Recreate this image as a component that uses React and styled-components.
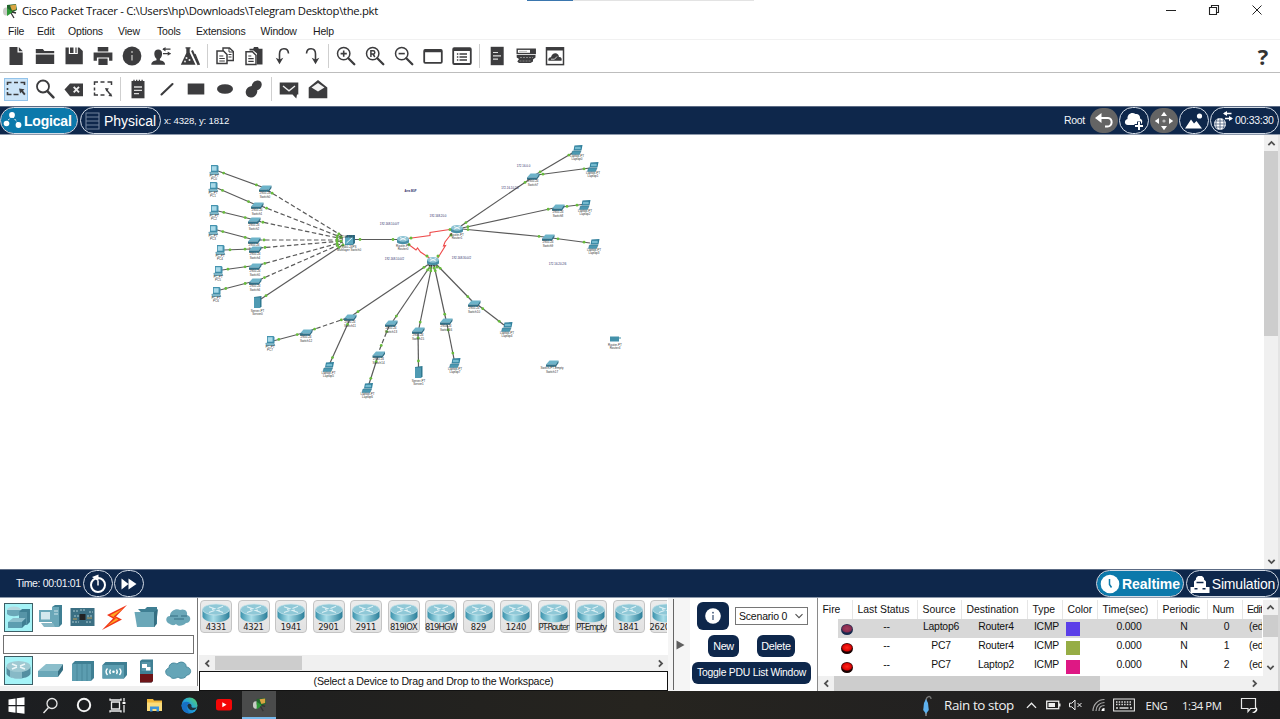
import React from "react";
import styled, { createGlobalStyle, css } from "styled-components";

const GlobalStyle = createGlobalStyle`
  * { box-sizing: border-box; }
  body { margin: 0; background: #fff; overflow: hidden; }
  svg { display: block; flex: none; }
`;

const NAVY = "#0e274b";
const INK = "#3c3c3e";

const Window = styled.div`
  width: 1280px; height: 719px; display: flex; flex-direction: column;
  font-family: "Liberation Sans", Arial, sans-serif; font-size: 10.5px; letter-spacing: -0.1px;
  color: #111; background: #fff; overflow: hidden; white-space: nowrap;
`;
const Row = styled.div`display: flex; align-items: center;`;
const Grow = styled.div`flex: 1; min-width: 0;`;

/* ---------- title, menu, toolbars ---------- */
const TitleBar = styled.header`
  height: 22px; display: flex; align-items: center; padding: 0 0 1px 2px; flex: none; position: relative;
`;
const TitleText = styled.span`
  font: 11.3px "Open Sans", sans-serif; letter-spacing: -0.32px; margin-left: 4px; color: #111;
`;
const ShareBar = styled.div`
  position: absolute; left: 527px; top: 0; width: 227px; height: 1px; background: #e3e3e3;
  border-left: 46px solid #3a76ae;
`;
const WinButtons = styled.div`display: flex; padding-right: 2px; margin-top: -2px;`;
const WinButton = styled.div`width: 43px; height: 20px; display: grid; place-items: center;`;
const MenuBar = styled.nav`
  height: 18px; flex: none; display: flex; align-items: center; padding: 0 0 0 8px; border-bottom: 1px solid #f1f1f1;
`;
const MenuItem = styled.span`width: ${p => p.$w}px; color: #1a1a1a; letter-spacing: -0.18px;`;
const Toolbar = styled.div`
  height: 33px; flex: none; display: flex; align-items: center; padding-left: 1.5px;
  border-bottom: 1px solid ${p => p.$line || "#bdbdbd"};
`;
const Tool = styled.div`width: 29px; height: 24px; display: grid; place-items: center;`;
const ToolFace = styled.div`
  width: 24px; height: 23px; display: grid; place-items: center;
  ${p => p.$on && css`background: #cce4f7; border: 1px solid #92c3ea;`}
`;
const Sep = styled.div`
  width: ${p => p.$w || 6}px; height: 24px; display: flex; justify-content: center;
  &::before { content: ""; width: 1px; background: #cfcfcf; }
`;
const HelpMark = styled.div`
  font: bold 22px/22px "Open Sans", sans-serif; color: #333; width: 34px; text-align: center;
`;

/* ---------- navy bars ---------- */
const NavyBar = styled.div`
  height: ${p => p.$h}px; flex: none; background: ${NAVY}; display: flex; align-items: center; color: #fff;
  border-top: 1px solid #5c6b84; border-bottom: 1px solid #8d99ab;
  padding-left: ${p => p.$pad || 0}px; padding-right: 1px;
`;
const Pill = styled.div`
  height: 27px; width: ${p => p.$w}px; margin-right: ${p => p.$gap ?? 1}px; border-radius: 14px;
  border: 1.5px solid ${p => (p.$flat ? "transparent" : "#d3dbe6")};
  background: ${p => (p.$on ? "#0c79ab" : p.$flat ? "#646464" : "transparent")};
  background-clip: padding-box; padding-left: ${p => p.$pad || 0}px;
  display: flex; align-items: center; justify-content: ${p => (p.$pad ? "flex-start" : "center")};
  gap: ${p => p.$space || 0}px; flex: none;
`;
const PillText = styled.span`
  font-size: 14px; letter-spacing: ${p => p.$ls || 0}px; font-weight: ${p => (p.$bold ? 700 : 400)};
`;
const SmallWhite = styled.span`
  color: #f2f5f9; font-size: ${p => p.$size || 10.5}px; letter-spacing: ${p => p.$ls || -0.2}px;
  width: ${p => (p.$w ? p.$w + "px" : "auto")}; padding-bottom: 1px;
`;

/* ---------- workspace ---------- */
const Workspace = styled.main`flex: 1; min-height: 0; display: flex; border-right: 2px solid #e4e4e4;`;
const VScroll = styled.div`
  width: ${p => p.$w || 14}px; background: #f0f0f0; display: flex; flex-direction: column; align-items: center; flex: none;
`;
const HScroll = styled.div`height: ${p => p.$h}px; background: #f0f0f0; display: flex; align-items: center; flex: none;`;
const Arrow = styled.div`width: 16px; height: ${p => p.$h || 16}px; display: grid; place-items: center; flex: none;`;
const Thumb = styled.div`
  background: #cdcdcd; width: ${p => (p.$w ? p.$w + "px" : "100%")}; height: ${p => (p.$h ? p.$h + "px" : "100%")}; flex: none;
`;

/* ---------- bottom dock ---------- */
const Dock = styled.section`height: 93px; flex: none; display: flex; background: #f0f0f0;`;
const Palette = styled.div`
  width: 198px; background: #fff; border-right: 1px solid #777; height: 88px; padding: 4px 3px 0 3px; display: flex; flex-direction: column;
`;
const PaletteRow = styled.div`display: flex; height: 30px; align-items: center;`;
const PaletteCell = styled.div`width: 32px; height: 29px; display: flex; justify-content: center; align-items: center;`;
const PaletteFace = styled.div`
  width: 29px; height: 29px; display: grid; place-items: center;
  ${p => p.$on && css`background: #a5f3f7; border: 1px solid #3d5f66;`}
`;
const SearchBox = styled.div`height: 19px; border: 1px solid #707070; background: #fff; margin: 3px 0 1px; width: 191px;`;
const DevicePanel = styled.div`width: 470px; display: flex; flex-direction: column; background: #fff; border-left: 1px solid #fff;`;
const DeviceRow = styled.div`height: 57px; display: flex; gap: 5.5px; padding: 2px 0 0 1px; overflow: hidden; margin-right: 1px;`;
const DeviceTile = styled.div`
  width: 32px; height: 32.5px; border: 1px solid #c4c4c4; border-radius: 4px; background: linear-gradient(#ececec, #e2e2e2);
  flex: none; display: flex; flex-direction: column; align-items: center; padding-top: 2px;
`;
const DeviceName = styled.span`
  font: 8.4px/9px "DejaVu Sans", sans-serif; letter-spacing: ${p => p.$ls || -0.2}px; color: #1c1c1c;
`;
const HintBox = styled.div`
  height: 20px; border: 1px solid #111; background: #fff; display: flex; align-items: center; justify-content: center;
  font-size: 10.6px; letter-spacing: -0.2px;
`;
const Splitter = styled.div`
  width: 22px; padding-left: 5px; display: flex; align-items: center; background: #f5f5f5;
  &::before { content: ""; width: 1px; height: 91px; background: #666; margin-right: 2px; }
`;
const PduPanel = styled.div`
  width: 128px; background: #fff; border-right: 1px solid #8a8a8a; padding: 4px 2px 0; display: flex; flex-direction: column; gap: 4.5px;
`;
const ScenarioRow = styled(Row)`gap: 6px; padding-left: 5px;`;
const ActionRow = styled(Row)`justify-content: space-between; padding: 0 20px 0 16px;`;
const NavyButton = styled.button`
  border: 0; padding: 0; border-radius: 6px; background: ${NAVY}; color: #fff; height: ${p => p.$h}px; width: ${p => p.$w}px;
  font: ${p => p.$size || 10.8}px "Liberation Sans", sans-serif; letter-spacing: ${p => p.$ls || -0.3}px;
  display: grid; place-items: center; flex: none;
`;
const SelectBox = styled.div`
  width: 73px; height: 18px; border: 1px solid #767676; display: flex; align-items: center; justify-content: space-between;
  padding: 0 3px; font-size: 10.5px; letter-spacing: -0.2px;
`;
const Table = styled.div`flex: 1; min-width: 0; display: flex; flex-direction: column; background: #fff; border-right: 2px solid #d5d5d5;`;
const TableTop = styled.div`height: 78px; display: flex; padding-top: 2px;`;
const Grid = styled.div`
  flex: 1; min-width: 0; display: grid; grid-template-columns: 35px 65px 44px 66px 35px 35px 60px 50px 35px 19px;
  grid-template-rows: 19px 19px 19px 19px; overflow: hidden;
`;
const Head = styled.div`
  border-right: 1px solid #e6e6e6; padding-left: 4.5px; line-height: 20px; overflow: hidden; font-size: 10.4px;
  letter-spacing: ${p => p.$ls ?? 0}px;
`;
const LastHead = styled(Head)`border-right: 0; padding-left: 4px;`;
const Cell = styled.div`
  font-size: 10.4px; letter-spacing: -0.2px; line-height: 16px; overflow: hidden; padding-left: 2px;
  display: flex; justify-content: ${p => (p.$left ? "flex-start" : "center")};
  background: ${p => (p.$sel ? "#d8d8d8" : "#fff")}; margin-left: ${p => p.$indent || 0}px;
`;
const EditCell = styled(Cell)`padding-left: 6px;`;
const Swatch = styled.div`width: 14px; height: 14px; margin: 3px 0 0 1px; background: ${p => p.$c};`;
const FireDot = styled.div`
  width: 14px; height: 11px; border-radius: 50%; margin: 4.5px 0 0 1px;
  background: ${p => (p.$sel
    ? "radial-gradient(ellipse 6px 4.5px at 50% 42%, #a33a5a 0, #8a2c50 70%, #14284c 100%)"
    : "radial-gradient(ellipse 6px 4.5px at 50% 42%, #ff2a1c 0, #e00505 70%, #180202 100%)")};
`;

/* ---------- taskbar ---------- */
const Taskbar = styled.footer`
  height: 28px; flex: none; display: flex; align-items: center;
  background: linear-gradient(90deg, #1c1e21 0, #20201f 25%, #26241f 50%, #222121 75%, #1c1c1d 100%);
  color: #f0f0f0; font: 11.3px "Open Sans", sans-serif; letter-spacing: -0.4px;
`;
const Task = styled.div`
  width: ${p => p.$w || 35}px; height: 28px; display: grid; place-items: center; flex: none;
  ${p => p.$active && css`background: #4a4b4b; border-bottom: 2px solid #76b9ed;`}
`;
const TrayText = styled.span`
  font-size: ${p => p.$size || 11.3}px; letter-spacing: ${p => p.$ls || -0.4}px; width: ${p => p.$w}px; flex: none;
`;

const Svg = ({ w = 20, h = w, vb, children, ...p }) => (
  <svg width={w} height={h} viewBox={vb || `0 0 ${w} ${h}`} fill="none" {...p}>{children}</svg>
);
const st = { stroke: INK, strokeWidth: 1.8, strokeLinecap: "round", strokeLinejoin: "round" };

const I = {
  doc: <Svg><path d="M3.5 1h8v5.5h5.2V19H3.5z M12.8 1l4 4.3h-4z" fill={INK} /></Svg>,
  folder: <Svg><path d="M.8 3h7l1.6 2h9.8v2.2H.8z M.8 8.5h18.4V18H.8z" fill={INK} /></Svg>,
  save: <Svg><path d="M1.5 1.5h3.3V8h9V1.5h1.4l3.6 3.6v13.2H1.5z M6 1.5h3.5V7H6z M11.4 1.5h1.2V7h-1.2z" fill={INK} /></Svg>,
  print: <Svg><path d="M4.7 1h10.6v4.4H4.7z M.6 6.4h18.8v8.3h-3.3v-3.3H3.9v3.3H.6z M5.4 12.6h9.2V19H5.4z" fill={INK} /></Svg>,
  info: <Svg><circle cx="10" cy="10" r="9.4" fill={INK} /><path d="M10 9v5.5" stroke="#aaa" strokeWidth="1.6" /><circle cx="10" cy="6" r="1" fill="#aaa" /></Svg>,
  user: <Svg><path d="M.3 18.8c0-3.2 2.7-4 5.2-4.6v-1.4c-1.500-1.300-2.200-3.200-2.200-5C3.300 5 5 3.600 7.200 3.600s3.900 1.400 3.900 4.200c0 1.800-.7 3.700-2.200 5v1.400c2.500.6 5.200 1.400 5.200 4.600z" fill={INK} /><path d="M12 3.200h7.500M19.500 7.600H12" stroke={INK} strokeWidth="1.3" /><path d="M14.500 1v4.400L11.300 3.200zM16.700 5.400v4.400l3.200-2.200z" fill={INK} /></Svg>,
  lab: <Svg><path d="M5.500 1.200h5v1.300h-.8v4L15.500 18.800H.8L6.300 7V2.500h-.8z" fill={INK} /><path d="M12 4.500l6.500 14.300" stroke={INK} strokeWidth="2" /><path d="M15 8l4.500 10.800" stroke={INK} strokeWidth="1.2" /><circle cx="6.500" cy="12" r="1" fill="#eee" /><circle cx="9.500" cy="14" r="1" fill="#eee" /><circle cx="5" cy="15.500" r=".9" fill="#eee" /></Svg>,
  copy: <Svg><path d="M8 2h6.500L18.300 5.500v9H8z" fill="#fff" stroke={INK} strokeWidth="1.4" /><path d="M14 2v4h4" stroke={INK} /><path d="M2 5h6.500l3.500 3.500V17.500H2z" fill="#fff" stroke={INK} strokeWidth="1.5" /><path d="M4.300 10h4M4.300 12.500h5.500M4.300 15h5.500M13.500 8.500h3M13.500 11h3" stroke={INK} strokeWidth="1.2" /></Svg>,
  paste: <Svg><path d="M5.500 2.800h3.700L10 1h4l.8 1.800h3.700V18.500H13V7.500L9.500 4.500h-4z" fill={INK} /><path d="M2 5.800h6.500L12 9.300v9.200H2z" stroke={INK} strokeWidth="1.5" fill="#fff" /><path d="M4.300 10h3M4.300 12.700h5.400M4.300 15.400h5.400" stroke={INK} strokeWidth="1.2" /></Svg>,
  undo: <Svg><path d="M15.500 7.500C15 1 6.500 1.200 6.500 8v6" stroke={INK} strokeWidth="1.6" /><path d="M2.700 11.800L6.500 18.300l3.800-6.500-3.800 1.600z" fill={INK} /></Svg>,
  redo: <Svg><path d="M4.500 7.500C5 1 13.500 1.200 13.500 8v6" stroke={INK} strokeWidth="1.6" /><path d="M9.700 11.800l3.800 6.500 3.800-6.500-3.800 1.600z" fill={INK} /></Svg>,
  win: <Svg><rect x="1.200" y="4" width="17.600" height="12.800" rx="1" stroke={INK} strokeWidth="1.8" /><path d="M1.500 5h17" stroke={INK} strokeWidth="2.5" /></Svg>,
  list: <Svg><rect x="1.200" y="2.200" width="17.600" height="15.800" rx="1" stroke={INK} strokeWidth="1.8" /><path d="M1.500 3.500h17" stroke={INK} strokeWidth="3" /><path d="M7.500 8h7.500M7.500 11h7.500M7.500 14h7.500M4.900 8h1.400M4.900 11h1.400M4.900 14h1.400" stroke={INK} strokeWidth="1.3" /></Svg>,
  note: <Svg><path d="M3.700 .8h13v18.400h-13z" fill={INK} /><path d="M6 6.500h5M6 9.800h8M6 13.200h5" stroke="#ddd" strokeWidth="1.2" /></Svg>,
  stack: <Svg><rect x="1.200" y="3.200" width="18" height="4.300" stroke={INK} strokeWidth="1.4" /><path d="M14 3h5.500v5H14zM.7 9h18.800v2.500L17 13.500v2L14.500 17H3l-1.700-1.500L3 13l-2.300-1.500z" fill={INK} /><path d="M3 5.400h8" stroke="#aaa" strokeWidth=".8" /><path d="M4 11.500h13M3.500 15h11" stroke="#999" strokeWidth=".8" strokeDasharray="2 1" /></Svg>,
  cloudwin: <Svg><rect x="1.500" y="1.800" width="17" height="16.800" stroke={INK} strokeWidth="1.5" /><path d="M1.500 3h17" stroke={INK} strokeWidth="3" /><path d="M3.500 14.800c-.8-2.200.8-3.800 2.500-3.600C6.800 8.200 9.500 6.500 12 7.800c1.800.9 2 2.500 1.800 3.300 2.500-.3 3.500 1.700 2.700 3.700z" fill={INK} /><path d="M6 13.200h3.500l2.500-2.700" stroke="#ddd" strokeWidth=".9" /></Svg>,
  select: <Svg><path d="M1.500 6V3.500h4M8 3.500h4M14.500 3.500h4V6M1.500 9v2M1.500 13v2.500h4M7.500 15.500h5" stroke={INK} strokeWidth="1.6" /><path d="M13 9.500l5.500.8-1.500 1.500 2.600 3.200-1.500 1.300-2.700-3.300-1.300 1.500z" fill={INK} /></Svg>,
  glass: <Svg><circle cx="8" cy="7.500" r="6" {...st} /><path d="M12.400 12.200l6 6.200" {...st} strokeWidth="2.5" /></Svg>,
  del: <Svg><path d="M.5 10.500l5.500-6h13v12.800H6z" fill={INK} /><path d="M9.700 7.900l5.300 5.400M15 7.900l-5.300 5.400" stroke="#eee" strokeWidth="1.9" /></Svg>,
  resize: <Svg><path d="M1.500 6V3h3.500M7.500 3h4M14.500 3h4v3M1.500 8.500v3M1.500 13.500v2.500h3.500M7.500 16h4" stroke={INK} strokeWidth="1.5" /><path d="M12 9l4 .6-2.700 2.800zM19.300 17.500l-4-.6 2.700-2.800z" fill={INK} /><path d="M13.500 10.700l4 5" stroke={INK} strokeWidth="1.4" /></Svg>,
  memo: <Svg><path d="M3.500 2h13v17.300h-13z" fill={INK} /><path d="M6 .7v2.600M8.700 .7v2.600M11.400 .7v2.600M14.100 .7v2.600" stroke={INK} strokeWidth="1.3" /><path d="M6 8h8M6 11.300h8M6 14.600h5" stroke="#ddd" strokeWidth="1.3" /></Svg>,
  line: <Svg><path d="M4.500 15.500L15.500 5" stroke={INK} strokeWidth="2.1" strokeLinecap="round" /></Svg>,
  rect: <Svg><rect x="1.700" y="4.500" width="16.600" height="11" fill={INK} /></Svg>,
  oval: <Svg><ellipse cx="10" cy="10" rx="8" ry="4.800" fill={INK} /></Svg>,
  blob: <Svg><ellipse cx="7.500" cy="12.800" rx="6" ry="5.500" transform="rotate(-40 7.500 12.800)" fill={INK} /><ellipse cx="12.700" cy="6.500" rx="5.500" ry="4.500" transform="rotate(-45 12.700 6.500)" fill={INK} /></Svg>,
  mailx: <Svg><path d="M.7 3.500h18.600v12H18l-.7 4-3.800-4H.7z" fill={INK} /><path d="M4 7l6 4.800L16 7" stroke="#eee" strokeWidth="1.4" /></Svg>,
  mailo: <Svg><path d="M.7 8.500L10 1l9.300 7.500v10.700H.7z" fill={INK} /><path d="M3.500 8.500L10 4l6.500 4.500L10 12.500z" fill="#f2f2f2" /></Svg>,
};
const Zoom = ({ kind }) => (
  <Svg>
    <circle cx="7.700" cy="7.600" r="6.200" {...st} strokeWidth="1.5" />
    <path d="M12.300 12.300l6 6" {...st} strokeWidth="2.3" />
    {kind === "R" ? <path d="M5.900 11V4.800h2.300a1.600 1.600 0 010 3.200H5.900M8 8l1.800 3" stroke={INK} strokeWidth="1.5" />
      : <path d={kind === "+" ? "M4.600 7.600h6.200M7.700 4.500v6.200" : "M4.600 7.600h6.200"} stroke={INK} strokeWidth="1.6" />}
  </Svg>
);
const Chevron = ({ dir = "down", c = "#505050", w = 9, s = 2 }) => {
  const rot = { down: 0, up: 180, left: 90, right: -90 }[dir];
  return <Svg w={w} vb="0 0 10 10"><path d="M1.500 3.200L5 6.700l3.500-3.500" stroke={c} strokeWidth={s} transform={`rotate(${rot} 5 5)`} /></Svg>;
};
const AppLogo = ({ w = 16 }) => (
  <Svg w={w} vb="0 0 16 16">
    <ellipse cx="4" cy="8.500" rx="3" ry="4" fill="#c8cbc6" /><path d="M5 2l9-1 1 6-6 3-4-2z" fill="#22642c" /><path d="M8 2.500l6-1v5l-4 1z" fill="#d9a441" />
    <path d="M5 5l6 4-6 4z" fill="#2e9937" /><path d="M9 10l3 5M10 9l4 1" stroke="#333" strokeWidth="1.3" />
  </Svg>
);

/* ---------- network topology ---------- */
const nodes = [
  ["pc", 214, 170, "PC-PT", "PC0"], ["pc", 213, 187, "PC-PT", "PC1"], ["pc", 214, 210, "PC-PT", "PC2"], ["pc", 213, 230, "PC-PT", "PC3"],
  ["pc", 220, 250, "PC-PT", "PC4"], ["pc", 218, 271, "PC-PT", "PC5"], ["pc", 216, 292, "PC-PT", "PC6"], ["pc", 270, 341, "PC-PT", "PC7"],
  ["sw", 265, 188, "2950-24", "Switch0"], ["sw", 257, 205, "2950-24", "Switch1"], ["sw", 254, 220, "2950-24", "Switch2"],
  ["sw", 254, 240, "2950-24", "Switch3"], ["sw", 255, 249, "2950-24", "Switch4"], ["sw", 255, 266, "2950-24", "Switch5"], ["sw", 255, 281, "2950-24", "Switch6"],
  ["srv", 257.5, 302, "Server-PT", "Server0"], ["ml", 349, 240, "3560-24PS", "Multilayer Switch0"],
  ["rt", 403, 240, "Router-PT", "Router0"], ["rt", 457, 229, "Router-PT", "Router1"], ["rt", 433, 261, "", ""],
  ["sw", 533, 176, "2950-24", "Switch7"], ["sw", 558, 207, "2950-24", "Switch8"], ["sw", 548, 237, "2950-24", "Switch9"],
  ["lap", 577, 150, "Laptop-PT", "Laptop0"], ["lap", 593, 167, "Laptop-PT", "Laptop1"], ["lap", 585, 205, "Laptop-PT", "Laptop2"], ["lap", 594, 244, "Laptop-PT", "Laptop3"],
  ["sw", 474, 303, "2950-24", "Switch10"], ["lap", 507, 327, "Laptop-PT", "Laptop4"], ["sw", 350, 317, "2950-24", "Switch11"],
  ["sw", 306, 332, "2950-24", "Switch12"], ["lap", 328.5, 367, "Laptop-PT", "Laptop5"], ["sw", 391, 323, "2950-24", "Switch13"],
  ["sw", 378.5, 354, "2950-24", "Switch14"], ["lap", 367.5, 388, "Laptop-PT", "Laptop6"], ["sw", 418, 330, "2950-24", "Switch15"],
  ["srv", 418.5, 372, "Server-PT", "Server1"], ["sw", 446, 321, "2950-24", "Switch16"], ["lap", 455, 363, "Laptop-PT", "Laptop7"],
  ["sw", 552, 363, "Switch-PT-Empty", "Switch17"], ["box", 615, 339, "Router-PT", "Router4"],
];
const links = [
  [218, 171, 262, 187], [217, 188, 254, 204], [218, 211, 251, 219], [217, 230, 251, 239], [224, 250, 251, 249], [222, 270, 251, 266], [220, 290, 251, 282],
  [267, 190, 344, 237, 1], [261, 206, 343, 238, 1], [257, 221, 343, 239, 1], [258, 240, 343, 240, 1], [259, 248, 343, 241, 1], [259, 265, 343, 242, 1], [259, 280, 343, 243, 1],
  [261, 299, 344, 244], [354, 239.5, 399, 239.5],
  [461, 226, 530, 179], [535, 175, 574, 152], [537, 175, 590, 168], [462, 228, 554, 208], [562, 207, 582, 204.5], [462, 229, 545, 237], [552, 238, 590, 243],
  [429, 264, 353, 315], [431, 265, 393, 321], [432, 265, 419, 328], [434, 265, 446, 320], [436, 264, 472, 301],
  [478, 305, 504, 325], [347, 318, 309, 331, 1], [303, 333, 273, 341], [350, 319, 330, 363], [389, 326, 379, 351, 1], [378, 356, 369, 384],
  [418, 332, 418.5, 367], [447, 324, 454, 359],
];
const notes = [
  [410.5, 192, "Area BGP"], [389.5, 225, "192.168.10.0/7"], [438, 216.5, "192.168.20.0"], [394.5, 259.5, "192.168.10.0/2"], [461.5, 258.5, "192.168.30.0/2"],
  [523.5, 167, "172.16.0.0"], [510, 188.5, "172.16.10.2/2"], [557.5, 264.5, "172.16.20.2/6"],
];
const glyph = {
  pc: <g><path d="M-3-5h6.500l1 1v6H-3z" fill="#4392ae" /><path d="M-2.200-3.800h4.800v4.500h-4.800z" fill="#a9d9e8" /><path d="M-4.200 2.200h8.200l.8 2.300h-8.500z" fill="#7fbccf" stroke="#33758c" strokeWidth=".5" /></g>,
  sw: <g><path d="M-6 1.500l3.500-4H6.500L4 1.500z" fill="#6db3c9" /><path d="M-6 1.500H3.800V3.800H-6zM3.800 1.500l2.700-4V0L3.800 3.800z" fill="#2f7189" /></g>,
  lap: <g><path d="M-2.500-4.500l8-.5-1 5.500h-8z" fill="#2f7f9c" /><path d="M-1.800-3.200h5.500v2.400h-6z" fill="#75bbd0" /><path d="M-4.500 1H4L2.500 4.500h-8z" fill="#4b98b1" stroke="#2c6c84" strokeWidth=".5" /></g>,
  srv: <g><path d="M-3.500-5L4-6V4.500L2.500 6h-6z" fill="#2f7990" /><path d="M-3.500-4.500h6V6h-6z" fill="#4f9ab2" /></g>,
  ml: <g><path d="M-4-3L-2-5h8v8l-2 2h-8z" fill="#2f7189" /><path d="M-4-3h8v7.500h-8z" fill="#5ba8c0" /><path d="M-2.500 3L3-2" stroke="#dff2f7" /></g>,
  rt: <g><path d="M-6-1v3.500c2 2.300 10 2.300 12 0V-1z" fill="#478fa6" /><ellipse cy="-1.200" rx="6" ry="2.900" fill="#8fc4d4" /><path d="M-3-2.500L3 .1M3-2.500L-3 .1" stroke="#fff" strokeWidth=".8" /></g>,
  box: <g><path d="M-5-2.500h9v5h-9z" fill="#4391aa" /><path d="M4-1.500h2v1h-2z" fill="#4391aa" /></g>,
};
const labelDrop = { pc: 6.8, sw: 6.3, lap: 7, srv: 9.5, ml: 7.8, rt: 6.8, box: 7 };
const Topology = () => (
  <svg width="1264" height="434" viewBox="0 135 1264 434" fontFamily="Liberation Sans, sans-serif" letterSpacing="0">
    {links.map(([a, b, c, d, dash], i) => {
      const len = Math.hypot(c - a, d - b), ux = (c - a) / len, uy = (d - b) / len, o = Math.min(6, len / 4);
      return (
        <g key={i}>
          <path d={`M${a} ${b}L${c} ${d}`} stroke="#5a5a5a" strokeWidth="1.2" strokeDasharray={dash ? "4.5 2.5" : undefined} />
          <circle cx={a + ux * o} cy={b + uy * o} r="1.4" fill="#67bb3b" />
          <circle cx={c - ux * o} cy={d - uy * o} r="1.4" fill="#67bb3b" />
        </g>
      );
    })}
    <path d="M408 238.500L430 235.500v-3L453 229M408 244l8 6 1.500-2 3 4 9 6M452 233l-7 9-1.500 4 2-.5-8 13" fill="none" stroke="#ee4b4b" strokeWidth="1.1" />
    {[[411, 238], [450, 229.5], [409, 244.5], [427, 256], [451, 235], [438, 256], [341, 237], [341, 241], [343, 245], [430, 268], [434, 268], [437, 267]].map(([x, y], i) =>
      <circle key={i} cx={x} cy={y} r="1.5" fill="#67bb3b" />)}
    <path d="M428.500 265.500h8" stroke="#333" strokeWidth="1.5" strokeDasharray="1.5 .8" />
    {nodes.map(([k, x, y, a, b], i) => (
      <g key={i} transform={`translate(${x} ${y})`}>
        {glyph[k]}
        <text textAnchor="middle" fontSize="3" fill="#333" y={labelDrop[k]}>{a}</text>
        <text textAnchor="middle" fontSize="3" fill="#333" y={labelDrop[k] + 3.4}>{b}</text>
      </g>
    ))}
    <text x="346" y="238" textAnchor="middle" fontSize="3" fill="#333">192.168.10.1</text>
    {notes.map(([x, y, t], i) => <text key={i} x={x} y={y} textAnchor="middle" fontSize={i ? 2.9 : 2.6} fontWeight={i ? 400 : 700} fill="#2b2b66">{t}</text>)}
  </svg>
);

/* ---------- palette artwork ---------- */
const T1 = "#6aa7b8", T2 = "#3f7f93";
const art = [
  <Svg w={27} key="n"><ellipse cx="9" cy="6" rx="7" ry="3.500" fill="#b5d8df" /><path d="M2 6v4c3 3 11 3 14 0V6z" fill={T1} /><path d="M14 8l3-3h8v13l-3 3h-8z" fill={T2} /><path d="M14 8h8v13h-8z" fill="#5694a7" /><path d="M3 18l5-4h13l-4 4z" fill="#8dc0cd" /><path d="M3 18h14v6H3z" fill="#5c9db0" /><path d="M17 18l4-4v6l-4 4z" fill={T2} /></Svg>,
  <Svg w={27} key="e"><path d="M15 3l3-2h7v19l-3 3h-7z" fill={T2} /><path d="M15 3h7v20h-7z" fill={T1} /><path d="M2 6h13v12H2z" fill={T1} /><path d="M4 8h9v7.500H4z" fill="#d5e9ee" /><path d="M4 19h12l2 4H7z" fill="#86b6c4" /><path d="M17 7h4M17 10h4" stroke="#d0e5ea" /></Svg>,
  <Svg w={27} key="c"><rect x="1.500" y="4" width="24" height="18" fill="#3b6f83" /><path d="M4 7h5M11 6h6M20 8h4M3 18h7M17 18h6M5 12h5M18 12h6" stroke="#a9c9cf" strokeDasharray="2 1" /><path d="M10.500 10h6v6h-6z" fill="#222" /><path d="M18 14h5M4 15h4" stroke="#be9c54" /></Svg>,
  <Svg w={27} key="b"><path d="M26 1L6 11l6 3.500L1 26l20-10.500-6-3z" fill="#f0361a" /><path d="M22 4.500L9 11.300l6 3L6 22l11.500-6.500-5-3z" fill="#ffa91f" /></Svg>,
  <Svg w={27} key="f"><path d="M5 5h7l2-2h10v17l-3 2z" fill={T2} /><path d="M1.500 8h19.500l1 15H4z" fill={T1} /><path d="M21 8l4-3-2 16-2 2z" fill="#356f82" /></Svg>,
  <Svg w={27} key="m"><path d="M5 20c-5-1-5-8 0-8C5 6 12 4 15 6c5-2 8 2 7 5 5 1 4 8-1 8-3 3-8 4-10 1-2 2-5 1-6 0z" fill={T1} /><path d="M5 12h8M9 15h10M16 12h6" stroke="#356f82" strokeWidth="1.2" /></Svg>,
];
const art2 = [
  <Svg w={27} key="r"><path d="M1.500 10v7c3 6 21 6 24 0v-7z" fill="#548fa1" /><path d="M5 13v7c6 3 10 2 12 1v-8z" fill="#9ccad5" opacity=".7" /><ellipse cx="13.500" cy="9.500" rx="12" ry="5.500" fill="#9fc9d2" /><path d="M7 7l5 2M20 7l-5 2M7 12l5-2M20 12l-5-2" stroke="#eef7f8" strokeWidth="1.5" /></Svg>,
  <Svg w={27} key="s"><path d="M1 14l8-7h17l-5 7z" fill="#8bbecb" /><path d="M1 14h20v6H1z" fill={T1} /><path d="M21 14l5-7v6l-5 7z" fill="#356f82" /></Svg>,
  <Svg w={27} key="h"><path d="M3 7l3-3h19v17l-3 3H3z" fill={T2} /><path d="M3 7h19v17H3z" fill="#5c9db0" /><path d="M8 7v17M13 7v17M18 7v17" stroke={T2} strokeWidth=".7" /></Svg>,
  <Svg w={27} key="w"><path d="M1.500 8l3-3H26v13l-3 3.500H1.500z" fill={T2} /><path d="M1.500 8H23v13.500H1.500z" fill="#5c9db0" /><path d="M6.500 11.500c-2 2-2 4 0 6.500M9.500 12.500c-1 1.500-1 3 0 4.500M18.500 11.500c2 2 2 4 0 6.500M15.500 12.500c1 1.500 1 3 0 4.500" stroke="#fff" strokeWidth="1.4" /><circle cx="12.500" cy="14.700" r="1.300" fill="#fff" /></Svg>,
  <Svg w={27} key="f"><path d="M7 4l2-1.500h11V24l-1.500 1.500H7z" fill={T2} /><path d="M8.500 5h9v9h-9z" fill="#5795a8" /><path d="M9 7h5v3h3.500v3.500H13v-2.500H9z" fill="#fff" /><path d="M7 17h13v7l-1.500 1.500H7z" fill="#6d1417" /></Svg>,
  <Svg w={27} key="c"><path d="M5 19c-5 0-6-7-1-8 0-5 5-6 8-4 4-4 10-1 9 3 6 0 6 8 1 8-2 4-7 4-9 2-3 2-7 2-8-1z" fill="#65a5b7" stroke="#4a8b9f" /></Svg>,
];
const RouterArt = () => (
  <Svg w={28} h={20}>
    <defs><linearGradient id="body"><stop offset="0" stopColor="#3b93ad" /><stop offset=".4" stopColor="#a9dde8" /><stop offset="1" stopColor="#2b7f9a" /></linearGradient></defs>
    <path d="M.5 6v8c3 7 24 7 27 0V6z" fill="url(#body)" /><ellipse cx="14" cy="6.500" rx="13.500" ry="5.500" fill="#8fc8d7" stroke="#cfe7ed" strokeWidth=".7" />
    <path d="M7 3.700l5.500 2-2.500.6M21 3.300l-5.500 2.200M7 9.500l5.500-2M21 9.500l-5.500-2 2.500-.5" stroke="#dcf0f4" strokeWidth="1.2" />
  </Svg>
);

const devices = [["4331"], ["4321"], ["1941"], ["2901"], ["2911"], ["819IOX", -0.5], ["819HGW", -0.8], ["829"], ["1240"], ["PT-Router", -1.15], ["PT-Empty", -1.15], ["1841"], ["2620XM"]];
const menu = [["File", 29], ["Edit", 31], ["Options", 50], ["View", 39], ["Tools", 39], ["Extensions", 64.5], ["Window", 52.5], ["Help", 30]];
const heads = [["Fire"], ["Last Status"], ["Source"], ["Destination"], ["Type"], ["Color"], ["Time(sec)"], ["Periodic"], ["Num", -0.2]];
const pdus = [["Laptop6", "Router4", "#5b3fe8", 0], ["PC7", "Router4", "#96ad45", 1], ["PC7", "Laptop2", "#de1884", 2]];

const ToolItem = ({ children, on }) => <Tool><ToolFace $on={on}>{children}</ToolFace></Tool>;
const PaletteStrip = ({ items }) => (
  <PaletteRow>{items.map((a, i) => <PaletteCell key={i}><PaletteFace $on={i === 0}>{a}</PaletteFace></PaletteCell>)}</PaletteRow>
);

export default function App() {
  return (
    <Window>
      <GlobalStyle />
      <TitleBar>
        <AppLogo />
        <TitleText>Cisco Packet Tracer - C:\Users\hp\Downloads\Telegram Desktop\the.pkt</TitleText>
        <ShareBar />
        <Grow />
        <WinButtons>
          <WinButton><Svg w={12}><path d="M1 6.500h10" stroke="#222" /></Svg></WinButton>
          <WinButton><Svg w={12}><path d="M1.500 3.500h7v7h-7zM3.500 3.500v-2h7v7h-2" stroke="#222" strokeWidth="1.1" /></Svg></WinButton>
          <WinButton><Svg w={12}><path d="M1.500 1.500l9 9M10.500 1.500l-9 9" stroke="#222" /></Svg></WinButton>
        </WinButtons>
      </TitleBar>
      <MenuBar>{menu.map(([t, w]) => <MenuItem key={t} $w={w}>{t}</MenuItem>)}</MenuBar>
      <Toolbar>
        {["doc", "folder", "save", "print", "info", "user", "lab"].map(k => <ToolItem key={k}>{I[k]}</ToolItem>)}
        <Sep $w={5.5} />
        {["copy", "paste", "undo", "redo"].map(k => <ToolItem key={k}>{I[k]}</ToolItem>)}
        <Sep $w={5.5} />
        <ToolItem><Zoom kind="+" /></ToolItem><ToolItem><Zoom kind="R" /></ToolItem><ToolItem><Zoom kind="-" /></ToolItem>
        <ToolItem>{I.win}</ToolItem><ToolItem>{I.list}</ToolItem>
        <Sep />
        {["note", "stack", "cloudwin"].map(k => <ToolItem key={k}>{I[k]}</ToolItem>)}
        <Grow />
        <HelpMark>?</HelpMark>
      </Toolbar>
      <Toolbar $line="#fff">
        <ToolItem on>{I.select}</ToolItem>
        {["glass", "del", "resize"].map(k => <ToolItem key={k}>{I[k]}</ToolItem>)}
        <Sep />
        {["memo", "line", "rect", "oval", "blob"].map(k => <ToolItem key={k}>{I[k]}</ToolItem>)}
        <Sep />
        {["mailx", "mailo"].map(k => <ToolItem key={k}>{I[k]}</ToolItem>)}
      </Toolbar>

      <NavyBar $h={29}>
        <Pill $w={78} $on $space={2} $gap={2} $pad={2}>
          <Svg w={19}><path d="M3 12L9 4.500l6.500 8.500" stroke="#fff" strokeDasharray="2 1.5" /><circle cx="9" cy="4" r="2.900" fill="#fff" /><circle cx="3.500" cy="12.500" r="2.800" fill="#fff" /><circle cx="15.500" cy="14" r="2.900" fill="#fff" /></Svg>
          <PillText $bold $ls={-0.2}>Logical</PillText>
        </Pill>
        <Pill $w={81} $space={4} $gap={3}>
          <Svg w={15} h={18}><path d="M1 1h13v16H1zM1 5h13M1 9h13M1 13h13" stroke="#71839d" strokeWidth="1.1" /></Svg>
          <PillText>Physical</PillText>
        </Pill>
        <SmallWhite $size={9.6} $ls={-0.2}>x: 4328, y: 1812</SmallWhite>
        <Grow />
        <SmallWhite $w={25} $ls={-0.3}>Root</SmallWhite>
        <Pill $w={30} $flat $gap={0}><Svg w={20}><path d="M6 7h8c5 0 5 9-1 8.500H11" stroke="#fff" strokeWidth="2" /><path d="M1 7l6.500-5v10z" fill="#fff" /></Svg></Pill>
        <Pill $w={30} $gap={0}><Svg w={20}><path d="M4 14c-4 0-4-5-.5-6C3 3 8 .5 11.500 3c3-.5 5 2 4.500 4.500 3 1 3 5 0 6.500z" fill="#fff" /><path d="M15 10.500v9M10.500 15h9" stroke={NAVY} strokeWidth="4" /><path d="M15 11v8M11 15h8" stroke="#fff" strokeWidth="2" /></Svg></Pill>
        <Pill $w={30} $flat $gap={0}><Svg w={20}><path d="M10 .8l3 4.200H7zM10 19.200L7 15h6zM.8 10L5 7v6zM19.200 10L15 13V7z" fill="#fff" /><circle cx="10" cy="10" r="1.600" fill="#bbb" /></Svg></Pill>
        <Pill $w={30} $gap={1}><Svg w={20}><path d="M1 17.500l6-9 3 4 2.500-2.500 5.500 7.500z" fill="#fff" /><circle cx="15.500" cy="5" r="2.600" fill="#fff" /></Svg></Pill>
        <Pill $w={69} $gap={0} $space={2} $pad={2}>
          <Svg w={20}><circle cx="7" cy="13" r="6" fill="#fff" /><path d="M1 13h12M7 7v12M2.500 10h9M2.500 16h9M4 8c-1.500 3-1.500 7 0 10M10 8c1.500 3 1.500 7 0 10" stroke="#31486a" strokeWidth=".7" /><path d="M11 2.500h7.500M19 7.500h-7" stroke="#fff" strokeWidth="1.7" /><path d="M14 0v5l-4-2.500zM16 5v5l4-2.500z" fill="#fff" /></Svg>
          <SmallWhite $ls={-0.3}>00:33:30</SmallWhite>
        </Pill>
      </NavyBar>

      <Workspace>
        <Grow><Topology /></Grow>
        <VScroll>
          <Arrow><Chevron dir="up" /></Arrow><Thumb $h={185} /><Grow /><Arrow><Chevron /></Arrow>
        </VScroll>
      </Workspace>

      <NavyBar $h={29} $pad={16}>
        <SmallWhite $w={67} $ls={-0.35}>Time: 00:01:01</SmallWhite>
        <Pill $w={30}><Svg w={20}><circle cx="10" cy="11" r="7" stroke="#fff" strokeWidth="2" /><path d="M10 7v4.500" stroke="#fff" strokeWidth="1.5" /><path d="M10.500 .5v7L4 3z" fill="#fff" /></Svg></Pill>
        <Pill $w={30}><Svg w={20}><path d="M2.500 4.500l7 5.500-7 5.500zM9.500 4.500L17.500 10l-8 5.500z" fill="#fff" /></Svg></Pill>
        <Grow />
        <Pill $w={88} $on $space={2} $gap={2}>
          <Svg w={20}><circle cx="10" cy="10" r="9.300" fill="#fff" /><path d="M9.500 5v5.500l2 3" stroke="#0c79ab" strokeWidth="1.5" /></Svg>
          <PillText $bold $ls={-0.05}>Realtime</PillText>
        </Pill>
        <Pill $w={93} $space={2} $gap={0}>
          <Svg w={20}><path d="M4 14V7.500l2-2V4l2-2h4l2 2v1.500l2 2V14z" fill="#fff" /><path d="M6.500 8.500h7" stroke={NAVY} strokeWidth="1.5" /><path d="M.5 13h4v2.500h3V13h5v2.500h3V13h4v6H.5z" fill="#fff" /></Svg>
          <PillText $ls={-0.2}>Simulation</PillText>
        </Pill>
      </NavyBar>

      <Dock>
        <Palette>
          <PaletteStrip items={art} />
          <SearchBox />
          <PaletteStrip items={art2} />
        </Palette>
        <DevicePanel>
          <DeviceRow>
            {devices.map(([d, ls]) => <DeviceTile key={d}><RouterArt /><DeviceName $ls={ls}>{d}</DeviceName></DeviceTile>)}
          </DeviceRow>
          <HScroll $h={16}><Arrow><Chevron dir="left" /></Arrow><Thumb $w={87} $h={14} /><Grow /><Arrow><Chevron dir="right" /></Arrow></HScroll>
          <HintBox>(Select a Device to Drag and Drop to the Workspace)</HintBox>
        </DevicePanel>
        <Splitter><Svg w={9} h={10}><path d="M.5 .5v9L8.500 5z" fill="#5f5f5f" /></Svg></Splitter>
        <PduPanel>
          <ScenarioRow>
            <NavyButton $w={32} $h={28} aria-label="info"><Svg w={16}><circle cx="8" cy="8" r="7.800" fill="#fff" /><path d="M8 7v5" stroke="#44597a" strokeWidth="1.3" /><circle cx="8" cy="4.700" r=".9" fill="#44597a" /></Svg></NavyButton>
            <SelectBox>Scenario 0<Chevron s={1.1} w={10} /></SelectBox>
          </ScenarioRow>
          <ActionRow><NavyButton $w={31} $h={22.5}>New</NavyButton><NavyButton $w={38} $h={22.5}>Delete</NavyButton></ActionRow>
          <NavyButton $w={119} $h={22.5} $size={10.4} $ls={-0.25}>Toggle PDU List Window</NavyButton>
        </PduPanel>
        <Table>
          <TableTop>
            <Grid>
              {heads.map(([h, ls]) => <Head key={h} $ls={ls}>{h}</Head>)}
              <LastHead $ls={-0.6}>Edit</LastHead>
              {pdus.map(([s, d, c, n]) => {
                const sel = n === 0;
                return (
                  <React.Fragment key={n}>
                    <Cell $sel={sel} $indent={20}><FireDot $sel={sel} /></Cell>
                    <Cell $sel={sel}>--</Cell><Cell $sel={sel}>{s}</Cell><Cell $sel={sel}>{d}</Cell><Cell $sel={sel}>ICMP</Cell>
                    <Cell $sel={sel} $left><Swatch $c={c} /></Cell>
                    <Cell $sel={sel}>0.000</Cell><Cell $sel={sel}>N</Cell><Cell $sel={sel}>{n}</Cell><EditCell $sel={sel} $left>(edit)</EditCell>
                  </React.Fragment>
                );
              })}
            </Grid>
            <VScroll $w={15}><Arrow $h={15}><Chevron dir="up" /></Arrow><Thumb $h={22} /><Grow /><Arrow $h={18}><Chevron /></Arrow></VScroll>
          </TableTop>
          <HScroll $h={15}><Arrow><Chevron dir="left" /></Arrow><Thumb $w={266} /><Grow /><Arrow><Chevron dir="right" /></Arrow><Arrow /></HScroll>
        </Table>
      </Dock>

      <Taskbar>
        <Task $w={33}><Svg w={17}><path d="M.5 2.500L7.500 1.500V8H.5zM8.700 1.300L16.500 .2V8H8.700zM.5 9.200h7v6.500l-7-1zM8.700 9.200h7.800v7.600l-7.800-1z" fill="#fff" /></Svg></Task>
        <Task><Svg w={17}><circle cx="10" cy="6.500" r="5" stroke="#e8e8e8" strokeWidth="1.3" /><path d="M6.500 10.500L1.500 16" stroke="#e8e8e8" strokeWidth="1.4" /></Svg></Task>
        <Task $w={32}><Svg w={16}><circle cx="8" cy="8" r="6.200" stroke="#f2f2f2" strokeWidth="2" /></Svg></Task>
        <Task><Svg w={17}><path d="M2.500 5h8v7h-8zM1 1.500v1.500h11V1.500M1 15.500V14h11v1.500M15 1v3.500M15 8v7.500" stroke="#eee" strokeWidth="1.3" /><path d="M13.500 5h3v2h-3z" fill="#fff" /></Svg></Task>
        <Task $w={38}><Svg w={17} h={16}><path d="M1 2h6l1 1.500h8V14H1z" fill="#f3b93c" /><path d="M1 5.500h15V14H1z" fill="#fbdc7c" /><path d="M4 14.500V9.500h9v5h-2.500v-2.500h-4v2.500z" fill="#3d94dc" /></Svg></Task>
        <Task $w={32}><Svg w={17}><defs><linearGradient id="edge" x1="0" y1="1" x2="1" y2="0"><stop offset="0" stopColor="#0f64b8" /><stop offset=".5" stopColor="#23a4de" /><stop offset="1" stopColor="#5bd65a" /></linearGradient></defs><circle cx="8.500" cy="8.500" r="8" fill="url(#edge)" /><path d="M6 8c2-2.500 5-1 4.500 1-.5 1.500 2 2.500 5.300 1.200C14 14.500 7 14.500 6 8z" fill="#20303a" /><path d="M.6 8C2 4 8 4 9.500 7 6 6 4.500 11 8.500 16.500 4 16 .5 13 .6 8z" fill="#1870c4" /></Svg></Task>
        <Task $w={37}><Svg w={16} h={12}><rect width="16" height="11.500" rx="2.500" fill="#f40707" /><path d="M6.300 3.300v5l4.200-2.500z" fill="#fff" /></Svg></Task>
        <Task $w={34} $active><AppLogo w={15} /></Task>
        <Grow />
        <Task $w={36}><Svg w={12} h={22}><path d="M6 7c0-5 5-6 5-2" stroke="#777" strokeWidth="1.3" /><path d="M4 9l2-4 2 4 .8 7L6 20l-2.800-4z" fill="#5eb1ee" /><path d="M6 19v3" stroke="#bbb" /></Svg></Task>
        <TrayText $size={13.4} $w={79.5} $ls={-0.38}>Rain to stop</TrayText>
        <Task $w={15}><Chevron dir="up" c="#eee" w={13} s={1} /></Task>
        <Task $w={30}><Svg w={15} h={10}><rect x=".7" y="1.200" width="12" height="7.500" stroke="#eee" strokeWidth="1.3" /><path d="M2.500 3h6.500v4H2.500zM13 3.500h1.500v3H13z" fill="#eee" /></Svg></Task>
        <Task $w={13}><Svg w={13} h={12}><path d="M.5 4.200h2.300L6 1v10L2.800 7.800H.5z" stroke="#eee" /><path d="M8.500 4l4 4M12.500 4l-4 4" stroke="#eee" /></Svg></Task>
        <Task $w={35}><Svg w={14}><path d="M1 13C1 6.500 6 1.500 12.500 1.500M4 13c0-5 3.500-8.500 8.500-8.500M7 13c0-3.500 2-5.500 5.500-5.500" stroke="#aaa" strokeWidth="1.2" /><path d="M9.500 13c0-2 1-3 3-3v3z" fill="#fff" /></Svg></Task>
        <Task $w={29}><KeyboardSlot><Svg w={22} h={14}><rect x=".6" y="1" width="20.800" height="12" stroke="#eee" /><path d="M3 4h16M3 6.500h16" stroke="#ddd" strokeDasharray="1.5 1.2" strokeWidth="1.3" /><path d="M3 10h2M6.500 10h9M17 10h2" stroke="#ddd" strokeWidth="1.3" /></Svg></KeyboardSlot></Task>
        <TrayText $w={36.5}>ENG</TrayText>
        <TrayText $w={47.5}>1:34 PM</TrayText>
        <Task $w={39}><Svg w={18} h={18}><path d="M1.500 2.500h14v10h-5l-2.500 3v-3H1.500z" stroke="#e8e8e8" strokeWidth="1.2" /><path d="M12 16a4 4 0 004-5 3 3 0 11-4 5z" fill="#fff" /></Svg></Task>
        <Task $w={11.5} />
      </Taskbar>
    </Window>
  );
}

const KeyboardSlot = styled.div`margin-left: -14px;`;
